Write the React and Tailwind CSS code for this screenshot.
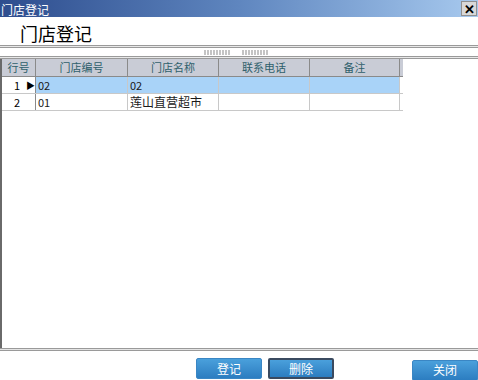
import React from 'react';

const cols = [
  { key: 'code', label: '门店编号', w: 'w-[92px]' },
  { key: 'name', label: '门店名称', w: 'w-[91px]' },
  { key: 'phone', label: '联系电话', w: 'w-[91px]' },
  { key: 'note', label: '备注', w: 'w-[90px]' },
];

const rows = [
  { no: 1, code: '02', name: '02', phone: '', note: '', current: true },
  { no: 2, code: '01', name: '莲山直营超市', phone: '', note: '' },
];

const Grip = () => (
  <div className="flex gap-[1px]">
    {Array.from({ length: 9 }).map((_, i) => (
      <span key={i} className="w-[2px] h-[5px] border-x border-[#c4c4c4]" />
    ))}
  </div>
);

const Btn = ({ children, active }) => (
  <button
    className={`w-[66px] h-[21px] text-[12px] text-white rounded-[2px] bg-gradient-to-b from-[#4aa0dc] to-[#2c7dc0] ${
      active ? 'border-2 border-[#3a4a60]' : 'border border-[#3a86c4]'
    }`}
  >
    {children}
  </button>
);

export default function App() {
  return (
    <div
      className="w-[478px] h-[380px] bg-white flex flex-col overflow-hidden"
      style={{ fontFamily: '"Noto Sans CJK SC", "Noto Sans", sans-serif' }}
    >
      {/* title bar */}
      <div className="h-[17px] flex items-center justify-between bg-gradient-to-r from-[#2e4d8e] via-[#5f86bf] to-[#a7c9ee]">
        <span className="text-white text-[12px] leading-none pl-[1px] pt-[2px]">门店登记</span>
        <span className="w-[16px] h-[15px] mr-[1px] bg-[#d8d8d8] border border-[#909090] flex items-center justify-center text-[13px] font-bold leading-none text-black">
          ✕
        </span>
      </div>

      {/* page heading */}
      <div className="h-[28px] flex items-center pl-[20px] pt-[3px]">
        <span className="text-[18px] text-black leading-none">门店登记</span>
      </div>
      <div className="h-[3px] border-t border-b border-[#9a9a9a] bg-[#e8e8e8]" />

      {/* splitter */}
      <div className="h-[8px] flex items-center justify-center gap-[12px] pr-[6px]">
        <Grip />
        <Grip />
      </div>
      <div className="h-[3px] border-t border-b border-[#9a9a9a] bg-[#e8e8e8]" />

      {/* grid */}
      <div className="flex-1 border-l-2 border-[#6a6a6a]">
        <div className="w-[401px] text-[11px]">
          <div className="flex h-[18px] bg-[#c9ccd6] border-b border-[#8a8a8a] text-[#2f5f6c]">
            <div className="w-[34px] flex items-center justify-center border-r border-[#8a8a8a]">行号</div>
            {cols.map((c) => (
              <div key={c.key} className={`${c.w} flex items-center justify-center border-r border-[#8a8a8a]`}>
                {c.label}
              </div>
            ))}
          </div>
          {rows.map((r) => (
            <div key={r.no} className="flex h-[17px] border-b border-[#c8c8c8]">
              <div className="w-[34px] flex items-center pl-[12px] border-r border-[#8a8a8a] bg-white text-black">
                <span className="w-[14px]">{r.no}</span>
                {r.current && <span className="text-[9px] leading-none">▶</span>}
              </div>
              {cols.map((c) => (
                <div
                  key={c.key}
                  className={`${c.w} flex items-center px-[2px] border-r border-[#c8c8c8] ${
                    r.current ? 'bg-[#a9d3f8]' : 'bg-white'
                  } ${c.key === 'name' && !r.current ? 'text-[12px]' : ''} text-[#1a1a1a]`}
                >
                  {r[c.key]}
                </div>
              ))}
            </div>
          ))}
        </div>
      </div>

      {/* footer */}
      <div className="h-[3px] border-t border-b border-[#9a9a9a] bg-[#e4e4e4]" />
      <div className="h-[29px] flex items-center pt-[6px]">
        <div className="ml-[196px] flex gap-[6px]">
          <Btn>登记</Btn>
          <Btn active>删除</Btn>
        </div>
        <div className="ml-auto">
          <Btn>关闭</Btn>
        </div>
      </div>
    </div>
  );
}
